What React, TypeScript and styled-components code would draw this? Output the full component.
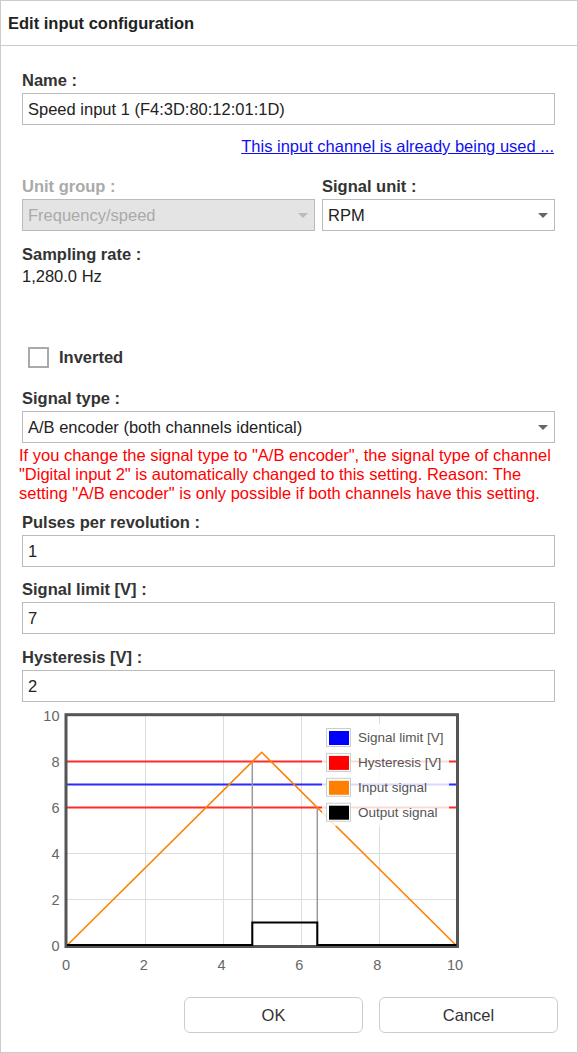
import { FC } from 'react';
import styled, { createGlobalStyle } from 'styled-components';

const GlobalStyle = createGlobalStyle`
  html, body {
    margin: 0;
    padding: 0;
    background: #ffffff;
  }
  body {
    font-family: 'Liberation Sans', Arial, sans-serif;
  }
`;

const Dialog = styled.div`
  box-sizing: border-box;
  width: 578px;
  height: 1053px;
  border: 1px solid #cccccc;
  background: #ffffff;
  display: flex;
  flex-direction: column;
`;

const Header = styled.div`
  height: 44px;
  border-bottom: 1px solid #cccccc;
  display: flex;
  align-items: center;
  padding-left: 7px;
  font-size: 16.5px;
  font-weight: bold;
  color: #222222;
`;

const Body = styled.div`
  padding: 25px 22px 0 21px;
  display: flex;
  flex-direction: column;
`;

const Field = styled.div<{ $mt?: number }>`
  margin-top: ${p => p.$mt ?? 0}px;
  display: flex;
  flex-direction: column;
`;

const Label = styled.label<{ $disabled?: boolean }>`
  display: block;
  font-size: 16.5px;
  line-height: 19px;
  font-weight: bold;
  color: ${p => (p.$disabled ? '#aaaaaa' : '#333333')};
  margin-bottom: 3px;
  white-space: nowrap;
`;

const TextInput = styled.input`
  box-sizing: border-box;
  width: 100%;
  height: 32px;
  margin: 0;
  border: 1px solid #bbbbbb;
  border-radius: 0;
  padding: 0 5px;
  font-family: 'Liberation Sans', Arial, sans-serif;
  font-size: 16.5px;
  color: #222222;
  background: #ffffff;
  outline: none;
`;

const SelectBox = styled.div<{ $disabled?: boolean }>`
  box-sizing: border-box;
  height: 32px;
  border: 1px solid #bbbbbb;
  padding: 0 6px 0 5px;
  display: flex;
  align-items: center;
  justify-content: space-between;
  font-size: 16.5px;
  color: ${p => (p.$disabled ? '#aaaaaa' : '#222222')};
  background: ${p => (p.$disabled ? '#e4e4e4' : '#ffffff')};
`;

const Caret = styled.span<{ $disabled?: boolean }>`
  width: 0;
  height: 0;
  border-left: 5px solid transparent;
  border-right: 5px solid transparent;
  border-top: 5px solid ${p => (p.$disabled ? '#bbbbbb' : '#666666')};
`;

const UsedLink = styled.a`
  display: block;
  margin-top: 12px;
  margin-right: 1px;
  text-align: right;
  font-size: 16.5px;
  line-height: 19px;
  color: #1010ee;
  text-decoration: underline;
`;

const UnitRow = styled.div`
  margin-top: 21px;
  display: grid;
  grid-template-columns: 293px 1fr;
  column-gap: 7px;
`;

const Value = styled.div`
  font-size: 16.5px;
  line-height: 19px;
  color: #222222;
`;

const CheckRow = styled.div`
  margin-top: 61px;
  display: flex;
  align-items: center;
  gap: 10px;
  padding-left: 6px;
  font-size: 16.5px;
  font-weight: bold;
  color: #333333;
`;

const CheckBox = styled.span`
  box-sizing: border-box;
  width: 21px;
  height: 21px;
  border: 2px solid #aaaaaa;
  background: #ffffff;
`;

const Warning = styled.div`
  margin: 3px 0 0 -3px;
  font-size: 16.5px;
  line-height: 19px;
  color: #ff0000;
  white-space: nowrap;
`;

const Chart = styled.svg`
  display: block;
  margin-top: 3px;
  font-family: 'Liberation Sans', Arial, sans-serif;
`;

const Footer = styled.div`
  margin-top: 20px;
  padding-right: 19px;
  display: flex;
  justify-content: flex-end;
  gap: 16px;
`;

const Button = styled.button`
  box-sizing: border-box;
  width: 179px;
  height: 36px;
  border: 1px solid #cccccc;
  border-radius: 6px;
  background: #ffffff;
  font-family: 'Liberation Sans', Arial, sans-serif;
  font-size: 16.5px;
  color: #333333;
  cursor: pointer;
`;

const Select: FC<{ value: string; disabled?: boolean }> = ({ value, disabled }) => (
  <SelectBox $disabled={disabled}>
    <span>{value}</span>
    <Caret $disabled={disabled} />
  </SelectBox>
);

const yPx = (v: number) => 945.5 - v * 23;
const gridX = [2, 4, 6, 8].map(v => 67.5 + v * 39);

const legend = [
  { name: 'Signal limit [V]', color: '#0000ff' },
  { name: 'Hysteresis [V]', color: '#ff0000' },
  { name: 'Input signal', color: '#ff8000' },
  { name: 'Output signal', color: '#000000' },
];

const SignalChart: FC = () => (
  <Chart width='450' height='272' viewBox='22 705 450 272'>
    <rect x='66' y='714.7' width='391.5' height='231.8' fill='#ffffff' />
    {gridX.map(x => (
      <line key={x} x1={x} y1='716' x2={x} y2='945' stroke='#dddddd' strokeWidth='1' />
    ))}
    {[2, 4, 6, 8].map(v => (
      <line key={v} x1='67' y1={yPx(v)} x2='456' y2={yPx(v)} stroke='#dddddd' strokeWidth='1' />
    ))}
    <line x1='67' y1={yPx(8)} x2='456' y2={yPx(8)} stroke='#ff2a2a' strokeWidth='2' />
    <line x1='67' y1={yPx(6)} x2='456' y2={yPx(6)} stroke='#ff2a2a' strokeWidth='2' />
    <line x1='67' y1={yPx(7)} x2='456' y2={yPx(7)} stroke='#2a2aff' strokeWidth='2' />
    <line x1='252.3' y1={yPx(8)} x2='252.3' y2='945' stroke='#999999' strokeWidth='1.5' />
    <line x1='317.3' y1={yPx(6)} x2='317.3' y2='945' stroke='#999999' strokeWidth='1.5' />
    <polyline
      points='67,945.5 261.7,752.3 456.3,945.5'
      fill='none'
      stroke='#ff8000'
      strokeWidth='1.6'
    />
    <rect x='66' y='714.7' width='391.5' height='231.8' fill='none' stroke='#555555' strokeWidth='3' />
    <polyline
      points='67,945 252.3,945 252.3,922.5 317.3,922.5 317.3,945 456.5,945'
      fill='none'
      stroke='#000000'
      strokeWidth='2'
    />
    <rect x='322' y='724' width='127' height='102' fill='#ffffff' fillOpacity='0.82' />
    {legend.map((item, i) => {
      const top = 728 + i * 24.9;
      return (
        <g key={item.name}>
          <rect x='326.5' y={top + 0.5} width='24' height='18' fill='#ffffff' stroke='#cccccc' strokeWidth='1' />
          <rect x='329' y={top + 3} width='20' height='14' fill={item.color} />
          <text x='358' y={top + 14} fontSize='13.5' fill='#555555'>
            {item.name}
          </text>
        </g>
      );
    })}
    {[0, 2, 4, 6, 8, 10].map(v => (
      <text key={v} x='59.5' y={yPx(v) + 5} fontSize='14.5' fill='#666666' textAnchor='end'>
        {v}
      </text>
    ))}
    {[0, 2, 4, 6, 8, 10].map(v => (
      <text key={v} x={66 + v * 38.9} y='969.5' fontSize='14.5' fill='#666666' textAnchor='middle'>
        {v}
      </text>
    ))}
  </Chart>
);

export default function App() {
  return (
    <>
      <GlobalStyle />
      <Dialog>
        <Header>Edit input configuration</Header>
        <Body>
          <Field>
            <Label>Name :</Label>
            <TextInput defaultValue='Speed input 1 (F4:3D:80:12:01:1D)' readOnly />
          </Field>
          <UsedLink href='#'>This input channel is already being used ...</UsedLink>
          <UnitRow>
            <Field>
              <Label $disabled>Unit group :</Label>
              <Select value='Frequency/speed' disabled />
            </Field>
            <Field>
              <Label>Signal unit :</Label>
              <Select value='RPM' />
            </Field>
          </UnitRow>
          <Field $mt={14}>
            <Label>Sampling rate :</Label>
            <Value>1,280.0 Hz</Value>
          </Field>
          <CheckRow>
            <CheckBox />
            Inverted
          </CheckRow>
          <Field $mt={21}>
            <Label>Signal type :</Label>
            <Select value='A/B encoder (both channels identical)' />
          </Field>
          <Warning>
            If you change the signal type to "A/B encoder", the signal type of channel
            <br />
            "Digital input 2" is automatically changed to this setting. Reason: The
            <br />
            setting "A/B encoder" is only possible if both channels have this setting.
          </Warning>
          <Field $mt={10}>
            <Label>Pulses per revolution :</Label>
            <TextInput defaultValue='1' readOnly />
          </Field>
          <Field $mt={13}>
            <Label>Signal limit [V] :</Label>
            <TextInput defaultValue='7' readOnly />
          </Field>
          <Field $mt={14}>
            <Label>Hysteresis [V] :</Label>
            <TextInput defaultValue='2' readOnly />
          </Field>
          <SignalChart />
        </Body>
        <Footer>
          <Button>OK</Button>
          <Button>Cancel</Button>
        </Footer>
      </Dialog>
    </>
  );
}
